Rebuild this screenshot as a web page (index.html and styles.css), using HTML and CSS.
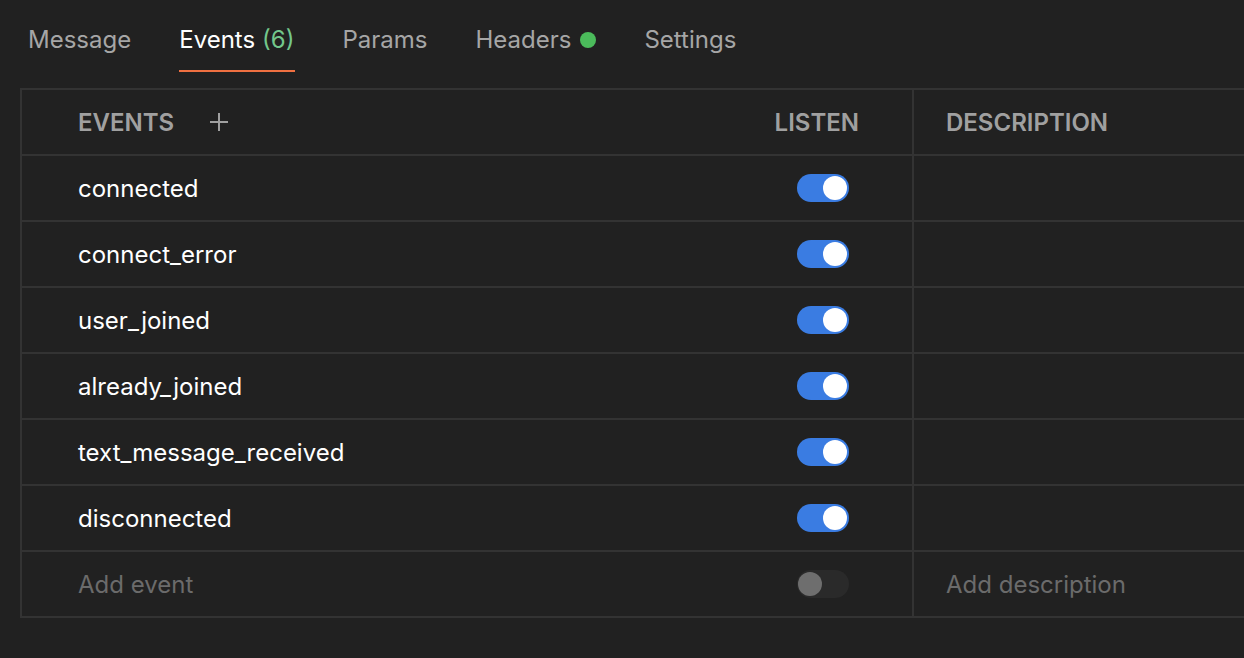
FILE: index.html
```html
<!DOCTYPE html>
<html>
<head>
<meta charset="utf-8">
<link rel="stylesheet" href="styles.css">
</head>
<body>
<nav class="tabs">
  <div class="tab">Message</div>
  <div class="tab active">Events <span class="count">(6)</span></div>
  <div class="tab">Params</div>
  <div class="tab">Headers <span class="dot"></span></div>
  <div class="tab">Settings</div>
</nav>
<div class="table">
  <div class="row head">
    <div class="cell name">EVENTS <span class="plus"><svg width="20" height="20" viewBox="0 0 20 20"><path d="M10 1v18M1 10h18" stroke="#a0a0a0" stroke-width="2"/></svg></span></div>
    <div class="cell listen"><span class="listen-label">LISTEN</span></div>
    <div class="cell desc">DESCRIPTION</div>
  </div>
  <div class="row"><div class="cell name">connected</div><div class="cell listen"><span class="toggle on"></span></div><div class="cell desc"></div></div>
  <div class="row"><div class="cell name">connect_error</div><div class="cell listen"><span class="toggle on"></span></div><div class="cell desc"></div></div>
  <div class="row"><div class="cell name">user_joined</div><div class="cell listen"><span class="toggle on"></span></div><div class="cell desc"></div></div>
  <div class="row"><div class="cell name">already_joined</div><div class="cell listen"><span class="toggle on"></span></div><div class="cell desc"></div></div>
  <div class="row"><div class="cell name">text_message_received</div><div class="cell listen"><span class="toggle on"></span></div><div class="cell desc"></div></div>
  <div class="row"><div class="cell name">disconnected</div><div class="cell listen"><span class="toggle on"></span></div><div class="cell desc"></div></div>
  <div class="row placeholder"><div class="cell name">Add event</div><div class="cell listen"><span class="toggle off"></span></div><div class="cell desc">Add description</div></div>
</div>
</body>
</html>
```
FILE: styles.css
```css
* { box-sizing: border-box; }
html, body { margin: 0; padding: 0; }
body {
  background: #212121;
  font-family: Inter, "Noto Sans", sans-serif;
  font-size: 24px;
  color: #ffffff;
  width: 1244px;
  height: 658px;
  overflow: hidden;
}
.tabs {
  display: flex;
  gap: 48px;
  padding-left: 28px;
  height: 88px;
  align-items: flex-start;
}
.tab {
  color: #a6a6a6;
  height: 72px;
  padding-top: 25px;
  line-height: 29px;
  display: flex;
  align-items: flex-start;
  white-space: nowrap;
}
.tab.active {
  color: #ffffff;
  border-bottom: 2px solid #f07041;
}
.count { color: #73c78c; margin-left: 7px; }
.dot {
  width: 16px; height: 16px;
  border-radius: 50%;
  background: #4bbb5b;
  margin-left: 9px;
  margin-top: 7px;
}
.table {
  margin-left: 20px;
  border-top: 2px solid #333333;
  border-left: 2px solid #333333;
}
.row {
  display: grid;
  grid-template-columns: 721px 171px 1fr;
  height: 66px;
  border-bottom: 2px solid #333333;
}
.row.head { height: 66px; }
.cell {
  display: flex;
  align-items: center;
  white-space: nowrap;
}
.name { padding-left: 56px; }
.listen {
  justify-content: flex-end;
  border-right: 2px solid #333333;
}
.desc { padding-left: 32px; }
.head .cell {
  color: #a0a0a0;
  font-weight: 600;
}
.plus { display: flex; margin-left: 35px; }
.listen-label { margin-right: 53px; }
.toggle {
  position: relative;
  width: 52px;
  height: 28px;
  border-radius: 14px;
  margin-right: 63px;
}
.toggle::after {
  content: "";
  position: absolute;
  top: 2px;
  width: 24px;
  height: 24px;
  border-radius: 50%;
}
.toggle.on { background: #3a7ce2; }
.toggle.on::after { right: 2px; background: #ffffff; }
.toggle.off { background: #2a2a2a; }
.toggle.off::after { left: 1px; background: #6e6e6e; }
.placeholder .cell { color: #6b6b6b; }
```
